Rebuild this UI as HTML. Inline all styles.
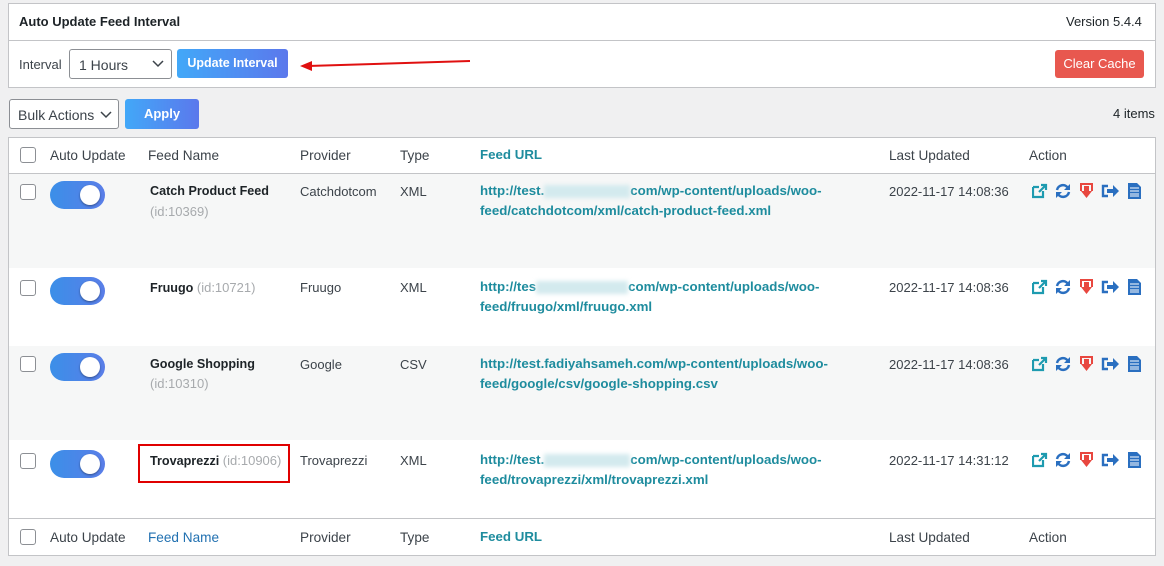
<!DOCTYPE html><html><head><style>
body{margin:0;width:1164px;height:566px;background:#f0f0f1;font-family:"Liberation Sans",sans-serif;font-size:13px;color:#3c434a;position:relative;overflow:hidden}
.a{position:absolute;white-space:nowrap}
.box{position:absolute;background:#fff;border:1px solid #c3c4c7}
.cb{position:absolute;width:14px;height:14px;border:1px solid #8c8f94;border-radius:3px;background:#fff}
.tg{position:absolute;width:55px;height:28px;border-radius:14px;background:linear-gradient(90deg,#3b8fe8,#5a7ee8)}
.tg:after{content:"";position:absolute;right:5px;top:4px;width:20px;height:20px;border-radius:50%;background:#fff;box-shadow:0 1px 2px rgba(0,0,0,.4)}
.btn{position:absolute;color:#fff;font-weight:bold;border-radius:3px;background:linear-gradient(90deg,#42a8f8,#5b78ec);text-align:center}
.url{color:#1e8c9e;font-weight:bold;line-height:20px;font-size:13.3px}
.bl{display:inline-block;background:#d3eaee;filter:blur(2px);height:13px;vertical-align:middle;color:transparent}
.nm{color:#1d2327;font-weight:bold;font-size:12.6px}
.id{color:#a7aaad;font-size:13px}
.row{position:absolute;left:9px;width:1146px}
.h{font-size:13.6px}
</style></head><body>
<div class="box" style="left:8px;top:3px;width:1146px;height:83px"></div>
<div class="a" style="left:9px;top:40px;width:1146px;height:1px;background:#c3c4c7"></div>
<div class="a" style="left:19px;top:14px;font-weight:bold;color:#1d2327">Auto Update Feed Interval</div>
<div class="a" style="left:1066px;top:14px;color:#1d2327">Version 5.4.4</div>
<div class="a" style="left:19px;top:57px">Interval</div>
<div class="a" style="left:69px;top:49px;width:101px;height:28px;border:1px solid #8c8f94;border-radius:3px;background:#fff"><span class="a" style="left:9px;top:7px;font-size:14px">1 Hours</span><svg class="a" style="left:82px;top:10px" width="12" height="8"><path d="M1 1l5 5 5-5" stroke="#3c434a" stroke-width="1.5" fill="none"/></svg></div>
<div class="btn" style="left:177px;top:49px;width:111px;height:29px;line-height:29px;font-size:12.5px">Update Interval</div>
<svg class="a" style="left:298px;top:58px" width="175" height="14"><path d="M10 8L172 3" stroke="#e01010" stroke-width="2"/><path d="M2 8l12-5v10z" fill="#e01010"/></svg>
<div class="btn" style="left:1055px;top:50px;width:89px;height:28px;line-height:28px;background:#e8584f;font-weight:normal">Clear Cache</div>
<div class="a" style="left:9px;top:99px;width:108px;height:28px;border:1px solid #8c8f94;border-radius:3px;background:#fff"><span class="a" style="left:8px;top:7px;font-size:14px">Bulk Actions</span><svg class="a" style="left:90px;top:11px" width="12" height="8"><path d="M1 1l5 5 5-5" stroke="#3c434a" stroke-width="1.5" fill="none"/></svg></div>
<div class="btn" style="left:125px;top:99px;width:74px;height:30px;line-height:30px">Apply</div>
<div class="a" style="left:1113px;top:106px;color:#1d2327">4 items</div>
<div class="box" style="left:8px;top:137px;width:1146px;height:417px"></div>
<div class="row" style="top:173px;height:1px;background:#c3c4c7"></div>
<div class="row" style="top:174px;height:94px;background:#f6f7f7"></div>
<div class="row" style="top:346px;height:94px;background:#f6f7f7"></div>
<div class="row" style="top:518px;height:1px;background:#c3c4c7"></div>
<div class="cb" style="left:20px;top:147px"></div>
<div class="a h" style="left:50px;top:148px">Auto Update</div>
<div class="a h" style="left:148px;top:148px">Feed Name</div>
<div class="a h" style="left:300px;top:148px">Provider</div>
<div class="a h" style="left:400px;top:148px">Type</div>
<div class="a url" style="left:480px;top:145px">Feed URL</div>
<div class="a h" style="left:889px;top:148px">Last Updated</div>
<div class="a h" style="left:1029px;top:148px">Action</div>
<div class="cb" style="left:20px;top:529px"></div>
<div class="a h" style="left:50px;top:530px">Auto Update</div>
<div class="a h" style="left:148px;top:530px;color:#2271b1">Feed Name</div>
<div class="a h" style="left:300px;top:530px">Provider</div>
<div class="a h" style="left:400px;top:530px">Type</div>
<div class="a url" style="left:480px;top:527px">Feed URL</div>
<div class="a h" style="left:889px;top:530px">Last Updated</div>
<div class="a h" style="left:1029px;top:530px">Action</div>

<div class="cb" style="left:20px;top:184px"></div><div class="tg" style="left:50px;top:181px"></div>
<div class="a nm" style="left:150px;top:184px">Catch Product Feed</div><div class="a id" style="left:150px;top:204px">(id:10369)</div>
<div class="a" style="left:300px;top:184px">Catchdotcom</div><div class="a" style="left:400px;top:184px">XML</div>
<div class="a url" style="left:480px;top:181px">http://test.<span class="bl" style="width:86px">x</span>com/wp-content/uploads/woo-<br>feed/catchdotcom/xml/catch-product-feed.xml</div>
<div class="a" style="left:889px;top:184px">2022-11-17 14:08:36</div>

<div class="cb" style="left:20px;top:280px"></div><div class="tg" style="left:50px;top:277px"></div>
<div class="a nm" style="left:150px;top:280px">Fruugo <span class="id" style="font-weight:normal">(id:10721)</span></div>
<div class="a" style="left:300px;top:280px">Fruugo</div><div class="a" style="left:400px;top:280px">XML</div>
<div class="a url" style="left:480px;top:277px">http://tes<span class="bl" style="width:92px">x</span>com/wp-content/uploads/woo-<br>feed/fruugo/xml/fruugo.xml</div>
<div class="a" style="left:889px;top:280px">2022-11-17 14:08:36</div>

<div class="cb" style="left:20px;top:356px"></div><div class="tg" style="left:50px;top:353px"></div>
<div class="a nm" style="left:150px;top:357px">Google Shopping</div><div class="a id" style="left:150px;top:376px">(id:10310)</div>
<div class="a" style="left:300px;top:357px">Google</div><div class="a" style="left:400px;top:357px">CSV</div>
<div class="a url" style="left:480px;top:354px">http://test.fadiyahsameh.com/wp-content/uploads/woo-<br>feed/google/csv/google-shopping.csv</div>
<div class="a" style="left:889px;top:357px">2022-11-17 14:08:36</div>

<div class="cb" style="left:20px;top:453px"></div><div class="tg" style="left:50px;top:450px"></div>
<div class="a" style="left:138px;top:444px;width:148px;height:35px;border:2px solid #e00000"></div>
<div class="a nm" style="left:150px;top:453px">Trovaprezzi <span class="id" style="font-weight:normal">(id:10906)</span></div>
<div class="a" style="left:300px;top:453px">Trovaprezzi</div><div class="a" style="left:400px;top:453px">XML</div>
<div class="a url" style="left:480px;top:450px">http://test.<span class="bl" style="width:86px">x</span>com/wp-content/uploads/woo-<br>feed/trovaprezzi/xml/trovaprezzi.xml</div>
<div class="a" style="left:889px;top:453px">2022-11-17 14:31:12</div>

<svg width="0" height="0" style="position:absolute"><defs>
<g id="ic">
<path d="M1 4h6M1 4v10h10v-6" stroke="#1e9bb0" stroke-width="2.2" fill="none"/><path d="M7 9l6-6M9 2h5v5" stroke="#1e9bb0" stroke-width="2.2" fill="none"/>
<g transform="translate(23,0)"><path d="M2 7a6 6 0 0 1 11-2M14 9a6 6 0 0 1-11 2" stroke="#2a6fc0" stroke-width="2.5" fill="none"/><path d="M15 1v6h-6zM1 15v-6h6z" fill="#2a6fc0"/></g>
<g transform="translate(47,0)"><path d="M1 0h13v8h-2V2H3v6H1z" fill="#e8473f"/><path d="M5 3h5v5h3l-5.5 7L2 8h3z" fill="#e8473f"/></g>
<g transform="translate(70,0)"><path d="M6 3H1v10h5" stroke="#2a6fc0" stroke-width="2.4" fill="none"/><path d="M5 6h6V2l6 6-6 6v-4H5z" fill="#2a6fc0"/></g>
<g transform="translate(96,0)"><path d="M0 0h9l4 4v12H0z" fill="#2a6fc0"/><path d="M2 5h9M2 8h9M2 11h9M2 13h9" stroke="#fff" stroke-width="1"/></g>
</g></defs></svg>
<svg class="a" style="left:1032px;top:183px" width="112" height="17"><use href="#ic"/></svg>
<svg class="a" style="left:1032px;top:279px" width="112" height="17"><use href="#ic"/></svg>
<svg class="a" style="left:1032px;top:356px" width="112" height="17"><use href="#ic"/></svg>
<svg class="a" style="left:1032px;top:452px" width="112" height="17"><use href="#ic"/></svg>
</body></html>
